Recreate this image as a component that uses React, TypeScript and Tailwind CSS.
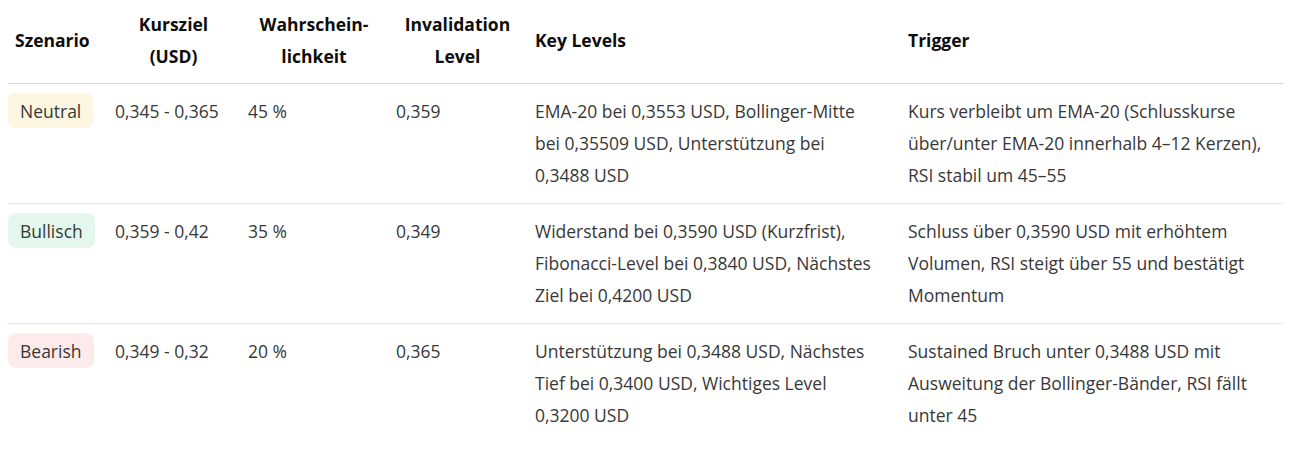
import React from 'react';

interface Scenario {
  name: string;
  badge: string;
  target: string;
  probability: string;
  invalidation: string;
  keyLevels: string;
  trigger: string;
}

const scenarios: Scenario[] = [
  {
    name: 'Neutral',
    badge: 'bg-[#fdf6e1]',
    target: '0,345 - 0,365',
    probability: '45 %',
    invalidation: '0,359',
    keyLevels: 'EMA-20 bei 0,3553 USD, Bollinger-Mitte bei 0,35509 USD, Unterstützung bei 0,3488 USD',
    trigger: 'Kurs verbleibt um EMA-20 (Schlusskurse über/unter EMA-20 innerhalb 4–12 Kerzen), RSI stabil um 45–55',
  },
  {
    name: 'Bullisch',
    badge: 'bg-[#e4f7ec]',
    target: '0,359 - 0,42',
    probability: '35 %',
    invalidation: '0,349',
    keyLevels: 'Widerstand bei 0,3590 USD (Kurzfrist), Fibonacci-Level bei 0,3840 USD, Nächstes Ziel bei 0,4200 USD',
    trigger: 'Schluss über 0,3590 USD mit erhöhtem Volumen, RSI steigt über 55 und bestätigt Momentum',
  },
  {
    name: 'Bearish',
    badge: 'bg-[#fdeaea]',
    target: '0,349 - 0,32',
    probability: '20 %',
    invalidation: '0,365',
    keyLevels: 'Unterstützung bei 0,3488 USD, Nächstes Tief bei 0,3400 USD, Wichtiges Level 0,3200 USD',
    trigger: 'Sustained Bruch unter 0,3488 USD mit Ausweitung der Bollinger-Bänder, RSI fällt unter 45',
  },
];

export default function App() {
  return (
    <div className="bg-white min-h-[455px] pl-2 pr-[6px] font-['Open_Sans',sans-serif] text-[17.5px]">
      <table className="w-full table-fixed border-collapse">
        <colgroup>
          <col className="w-[99px]" />
          <col className="w-[133px]" />
          <col className="w-[148px]" />
          <col className="w-[139px]" />
          <col className="w-[373px]" />
          <col />
        </colgroup>
        <thead>
          <tr className="border-b border-[#d9d9d9] text-[#0d0d0d] font-semibold leading-8">
            <th className="pl-[7px] pr-2 pt-2 pb-[11px] text-left align-middle">Szenario</th>
            <th className="px-2 pt-2 pb-[11px] text-center align-middle">Kursziel (USD)</th>
            <th className="px-2 pt-2 pb-[11px] text-center align-middle">
              Wahrschein-
              <br />
              lichkeit
            </th>
            <th className="px-2 pt-2 pb-[11px] text-center align-middle">Invalidation Level</th>
            <th className="px-2 pt-2 pb-[11px] text-left align-middle">Key Levels</th>
            <th className="px-2 pt-2 pb-[11px] text-left align-middle">Trigger</th>
          </tr>
        </thead>
        <tbody className="text-[#383838] leading-8">
          {scenarios.map((s, i) => (
            <tr key={s.name} className={i < scenarios.length - 1 ? 'border-b border-[#e5e5e5]' : ''}>
              <td className="pt-[9px] pb-3 pr-2 align-top">
                <span className={`inline-flex items-center h-[35px] px-3 rounded-lg ${s.badge}`}>{s.name}</span>
              </td>
              <td className="px-2 pt-[11px] pb-3 align-top whitespace-nowrap">{s.target}</td>
              <td className="px-2 pt-[11px] pb-3 align-top">{s.probability}</td>
              <td className="px-2 pt-[11px] pb-3 align-top">{s.invalidation}</td>
              <td className="pl-2 pr-5 pt-[11px] pb-3 align-top">{s.keyLevels}</td>
              <td className="pl-2 pr-3 pt-[11px] pb-3 align-top">{s.trigger}</td>
            </tr>
          ))}
        </tbody>
      </table>
    </div>
  );
}
